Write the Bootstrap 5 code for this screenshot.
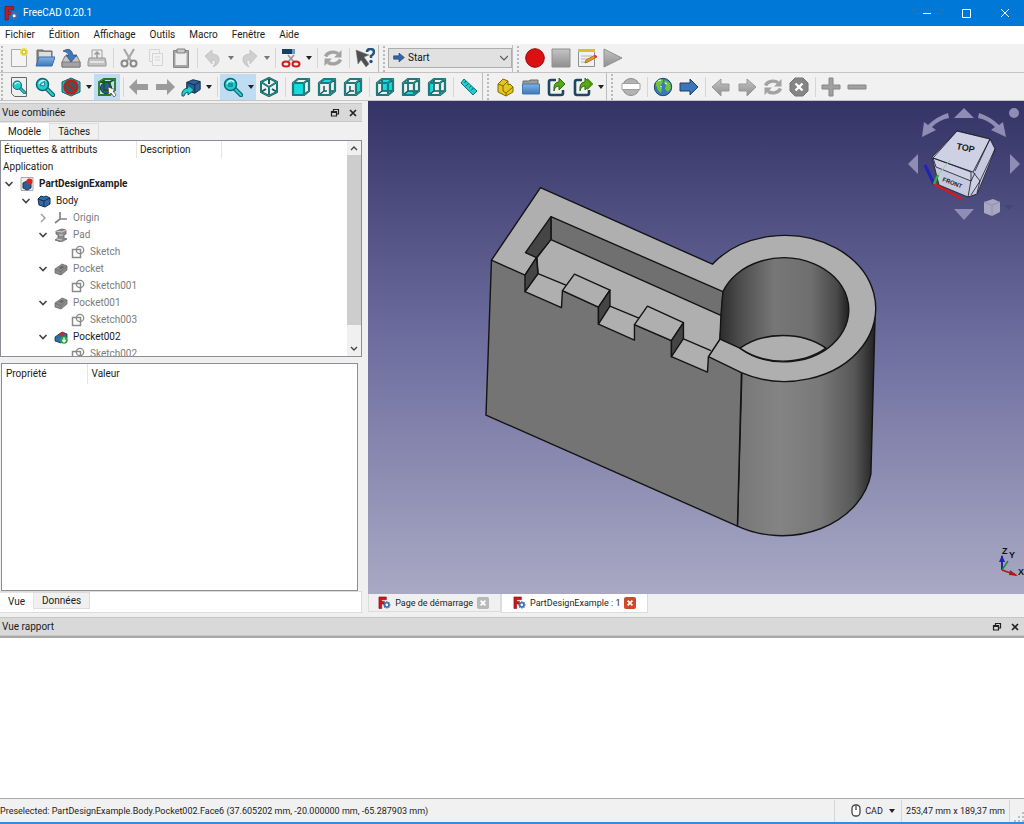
<!DOCTYPE html>
<html lang="fr">
<head>
<meta charset="utf-8">
<meta name="viewport" content="width=device-width, initial-scale=1">
<title>FreeCAD 0.20.1</title>
<link href="https://cdn.jsdelivr.net/npm/bootstrap@5.3.0/dist/css/bootstrap.min.css" rel="stylesheet">
<style>
body{font-family:Roboto,"Noto Sans",sans-serif;font-size:10px;line-height:16px;color:#1c1c1c;background:#f0f0f0}
button{font:inherit;color:inherit;border:0;background:none;padding:0}
svg{display:block;flex:none}
.titlebar{background:#0078d7;color:#fff;height:26px;padding-left:4px}
.winbtn{width:39px;height:26px}
.menubar{background:#fff;height:18px;padding-left:5px;gap:14px}
.menubar a{color:#1c1c1c;text-decoration:none}
.toolrow{height:29px;border-bottom:1px solid #c4c4c4;background:#f1f1f1}
.toolrow.low{height:28px}
.tool{width:26px;height:26px;display:flex;align-items:center;justify-content:center;flex:none}
.tool.on,.drop.on{background:#bfdcf2}
.drop{width:10px;height:26px;display:flex;align-items:center;justify-content:center;flex:none}
.drop::before{content:"";border:3px solid transparent;border-top:4px solid #222;border-bottom:0}
.drop.off::before{border-top-color:#777}
.gapline{width:6px;height:20px;flex:none;border-left:1px solid #d6d6d6;margin-left:3px;margin-right:-3px}
.grip{flex:none;width:10px;height:27px;border-left:1px solid #bdbdbd;background:radial-gradient(circle,#b9b9b9 1px,transparent 1px) 3px 0/4px 4px repeat-y}
.grip.wide{width:12px}
.grip.lead0{width:6px;border-left:0;background-position:0 0}
.bench{width:124px;height:20px;position:relative}
.bench select{width:100%;height:20px;border:1px solid #adadad;background:#e1e1e1;border-radius:0;font-size:10px;line-height:16px;padding:0 0 0 19px;appearance:none;color:#111}
.bench svg{position:absolute;top:4px;pointer-events:none}
.bench .arr{left:5px}.bench .chev{right:4px;top:7px}
.workarea{flex:20 1 0;min-height:0}
.leftdock{width:35.95%;padding:2px 6px 0 0;min-height:0}
.report{flex:7 1 0;min-height:0}
.dockhead{height:19px;background:#d9d9d9;border:1px solid #c6c6c6;border-left:0;border-right:0;padding:0 0 0 2px;flex:none}
.dockhead button{width:18px;height:16px;display:flex;align-items:center;justify-content:center}
.tabrow{height:18px;flex:none}
.tabrow button{padding:0 8px;background:#f0f0f0;border:1px solid #dcdcdc;border-left:0;line-height:16px;height:17px}
.tabrow button.cur{background:#fff;height:18px;border-color:#e4e4e4;border-bottom:0}
.treebox{flex:19 1 0;background:#fff;border:1px solid #8d8d96;min-height:0;overflow:hidden}
.treebox ul{list-style:none;margin:0;padding:0}
.treebox li{height:17px;line-height:17px;display:flex;align-items:center;gap:5px;color:#7c7c7c;white-space:nowrap}
.treebox li.act{color:#1c1c1c}
.l1{padding-left:2px}.l2{padding-left:19px}.l3{padding-left:36px}.treebox li.l4{padding-left:70px}
.treehead{height:17px;line-height:18px}
.treehead div{border-right:1px solid #e4e4e4;padding-left:3px}
.h1c{width:136px}.h2c{width:85px}
.sbar{width:14px;background:#f0f0f0;flex:none}
.sbar i{display:block;background:#cdcdcd;flex:0 0 79%}
.propbox{flex:20 1 0;background:#fff;border:1px solid #8d8d96;margin:6px 4px 0 1px;min-height:0}
.propbox table{width:100%}
.propbox th{font-weight:400;line-height:20px;padding:0 0 0 4px}
.propbox th:first-child{width:85px;border-right:1px solid #e4e4e4}
.bottabs{background:#fff;border:1px solid #dcdcdc;border-left:0;height:22px}
.scene{flex:1 1 0;min-height:0;position:relative;background:linear-gradient(#333366,#6f6fa0 50%,#a9a9c4);overflow:hidden}
.scene .model{width:100%;height:100%}
.navcube{position:absolute;top:0;right:0}
.axes{position:absolute;right:0;bottom:12px}
.doctabs{height:19px;flex:none;font-size:9px}
.doctabs .doc{display:flex;align-items:center;height:18px;border:1px solid #dcdcdc;border-top:0;background:#f0f0f0;padding:0 11px 0 9px;gap:4px}
.doctabs .doc.cur{background:#fff;height:19px;padding:0 11px}
.closer{width:12px;height:12px;border-radius:2px;background:#b9b9b9;display:flex;align-items:center;justify-content:center}
.closer.hot{background:#cf4a24}
.logarea{flex:1;border:0;background:#fff;border-top:2px solid #a8a8a8;resize:none;outline:0;display:block;width:100%}
.statusbar{height:26px;border-top:1px solid #a8a8a8;border-bottom:2px solid #3c8bd0;background:#f1f1f1;font-size:9px}
.cell{border-left:1px solid #d6d6d6;height:22px;display:flex;align-items:center}
</style>
</head>
<body class="d-flex flex-column vh-100 overflow-hidden m-0">
<svg width="0" height="0" class="position-absolute" aria-hidden="true">
<defs>
<linearGradient id="gg" x1="0" y1="0" x2="0" y2="1"><stop offset="0" stop-color="#c4c4c4"/><stop offset="1" stop-color="#8f8f8f"/></linearGradient>
<linearGradient id="bb" x1="0" y1="0" x2="0" y2="1"><stop offset="0" stop-color="#82b4e4"/><stop offset="1" stop-color="#3d78bb"/></linearGradient>
<symbol id="fc" viewBox="0 0 14 14"><path d="M1 .5h8v3H4v2h3v2.500H4V13H1z" fill="#d0161d" stroke="#7a0c10" stroke-width=".6"/><circle cx="9.500" cy="9" r="2.300" fill="#fff" stroke="#3f6eb0" stroke-width="1.800"/><path d="M9.500 5v1.500M9.500 11.500V13M5.500 9H7M12 9h1.500M6.700 6.200l1 1M11.300 10.800l1 1M6.700 11.800l1-1M11.300 7.200l1-1" stroke="#3f6eb0" stroke-width="1.500"/></symbol>
<symbol id="cube" viewBox="0 0 20 20"><path d="M2 6l5-4h11v12l-5 4H2zM2 6h11v12M13 6l5-4" fill="none" stroke="#0c5c5f" stroke-width="2.200" stroke-linejoin="round"/><path d="M2 6l5-4h11v12l-5 4H2zM2 6h11v12M13 6l5-4" fill="none" stroke="#3aa7a6" stroke-width=".8"/></symbol>
<symbol id="hid" viewBox="0 0 20 20"><path d="M7 2v12h11M7 14l-5 4" fill="none" stroke="#0c5c5f" stroke-width="1.600"/></symbol>
<symbol id="mag" viewBox="0 0 20 20"><path d="M11 11l7 7" stroke="#0b666c" stroke-width="4.500" stroke-linecap="round"/><path d="M11 11l7 7" stroke="#21cdd0" stroke-width="2.200" stroke-linecap="round"/><circle cx="7.500" cy="7.500" r="6" fill="#21cdd0" stroke="#0b666c" stroke-width="1.500"/><path d="M4 7a4 4 0 0 1 7-2" fill="none" stroke="#c9ffff" stroke-width="1.500"/></symbol>
<symbol id="larr" viewBox="0 0 20 20"><path d="M0 10l8-8v5h11v6H8v5z" fill="#9b9b9b"/></symbol>
<symbol id="rarr" viewBox="0 0 20 20"><path d="M20 10l-8-8v5H1v6h11v5z" fill="#9b9b9b"/></symbol>
<symbol id="sync" viewBox="0 0 20 20"><path d="M2.500 8.500A8 6.500 0 0 1 15 5.500M17.500 11.500A8 6.500 0 0 1 5 14.500" fill="none" stroke="#a2a2a2" stroke-width="3.400"/><path d="M18.500 2v7.500H11zM1.500 18v-7.500H9z" fill="#a2a2a2"/></symbol>
<symbol id="bcube" viewBox="0 0 20 20"><path d="M3 6l7-3 8 2v9l-6 4-9-3z" fill="#2e5f9a" stroke="#10243f"/><path d="M3 6l9 3 6-4M12 9v9" stroke="#10243f" fill="none"/></symbol>
<symbol id="chv" viewBox="0 0 10 10"><path d="M1.500 3L5 6.500 8.500 3" fill="none" stroke="#444" stroke-width="1.600"/></symbol>
<symbol id="sk" viewBox="0 0 14 14"><path d="M1.500 4.500h8v8h-8z" fill="none" stroke="#8a8a8a" stroke-width="1.500"/><circle cx="9" cy="5" r="3.700" fill="none" stroke="#8a8a8a" stroke-width="1.300"/></symbol>
<symbol id="pk" viewBox="0 0 14 14"><path d="M1 7l7-5 5 2v4l-6 5-6-2z" fill="#8b8b8b" stroke="#6c6c6c" stroke-width=".8"/><path d="M1 7l6 2.500L13 4M7 9.500V13" fill="none" stroke="#6c6c6c" stroke-width=".7"/><path d="M5 6l3-2 2 1-3 2z" fill="#606060"/></symbol>
<symbol id="rest" viewBox="0 0 10 10"><path d="M3.500 3V1.500h5V6H7M1.500 3.500h5v4.500h-5zM1.500 4.500h5" fill="none" stroke="#222" stroke-width="1.200"/></symbol>
<symbol id="x" viewBox="0 0 10 10"><path d="M2 2l6 6M8 2L2 8" stroke="#222" stroke-width="1.700"/></symbol>
<symbol id="xw" viewBox="0 0 10 10"><path d="M2 2l6 6M8 2L2 8" stroke="#fff" stroke-width="2.200"/></symbol>
<symbol id="exp" viewBox="0 0 20 20"><path d="M9 3H4Q2 3 2 5v11q0 2 2 2h10q2 0 2-2v-3" fill="none" stroke="#1f4763" stroke-width="2.600"/><path d="M7 14Q6 5 12 5V1l6 6-6 6V9q-4 0-5 5z" fill="#5aa818" stroke="#2f6a08"/></symbol>
</defs>
</svg>

<header class="titlebar d-flex align-items-center">
<svg width="15" height="15"><use href="#fc"/></svg><span class="ms-1">FreeCAD 0.20.1</span>
<div class="ms-auto d-flex">
<button class="winbtn" aria-label="Réduire"><svg class="mx-auto" width="10" height="10"><path d="M1 5.500h8" stroke="#fff"/></svg></button>
<button class="winbtn" aria-label="Agrandir"><svg class="mx-auto" width="10" height="10"><path d="M1.500 1.500h8v8h-8z" fill="none" stroke="#fff"/></svg></button>
<button class="winbtn" aria-label="Fermer"><svg class="mx-auto" width="10" height="10"><path d="M1 1l8 8M9 1L1 9" stroke="#fff"/></svg></button>
</div>
</header>
<nav class="menubar d-flex align-items-center"><a href="#">Fichier</a><a href="#">Édition</a><a href="#">Affichage</a><a href="#">Outils</a><a href="#">Macro</a><a href="#">Fenêtre</a><a href="#">Aide</a></nav>

<div class="toolrow d-flex align-items-center">
<span class="grip lead0"></span>
<button class="tool" aria-label="Nouveau"><svg width="20" height="20"><path d="M2.500 1.500h15v17h-15z" fill="#f4f4f4" stroke="#a9a9a9"/><circle cx="15" cy="4" r="4" fill="#ede24a"/><circle cx="15" cy="4" r="2" fill="#fffbd0" stroke="#c2b21f"/></svg></button>
<button class="tool" aria-label="Ouvrir"><svg width="20" height="20"><path d="M2 2h6l1 1h8v14H2z" fill="#8d8d8d" stroke="#666"/><path d="M4 4h12v6H4z" fill="#ddd"/><path d="M4 9h16l-3 9H1z" fill="url(#bb)" stroke="#3a6ca8"/></svg></button>
<button class="tool" aria-label="Enregistrer"><svg width="20" height="20"><path d="M4 8h12l3 6v5H1v-5z" fill="#c6c6c6" stroke="#7c7c7c"/><path d="M1 14h18v5H1z" fill="#a3a3a3" stroke="#7c7c7c"/><path d="M2 3q8-5 10 4h4l-6 7-5-7h3q-1-3-6-4z" fill="#3f78b5" stroke="#254f80" stroke-width=".7"/></svg></button>
<button class="tool" aria-label="Imprimer"><svg width="20" height="20"><path d="M5 2h10v9H5z" fill="#eee" stroke="#a0a0a0"/><path d="M10 4v6M7.500 6.500L10 4l2.500 2.500" stroke="#999" stroke-width="1.500" fill="none"/><path d="M2 10h16l1 4v4H1v-4z" fill="#c2c2c2" stroke="#969696"/><path d="M3 14h14" stroke="#eee" stroke-width="1.500"/></svg></button>
<span class="gapline"></span>
<button class="tool" aria-label="Couper"><svg width="20" height="20"><path d="M5 1l7 12M15 1L8 13" stroke="#a8a8a8" stroke-width="2.200"/><circle cx="5.500" cy="15.500" r="3" fill="none" stroke="#8a8a8a" stroke-width="2"/><circle cx="14.500" cy="15.500" r="3" fill="none" stroke="#8a8a8a" stroke-width="2"/></svg></button>
<button class="tool" aria-label="Copier"><svg width="20" height="20" fill="#f2f2f2" stroke="#d4d4d4"><path d="M4.500 1.500h10v12h-10z"/><path d="M7.500 5.500h10v12h-10zM10 9h5M10 12h5"/></svg></button>
<button class="tool" aria-label="Coller"><svg width="20" height="20"><path d="M2.500 2.500h15v17h-15z" fill="#a5a5a5" stroke="#858585"/><path d="M4.500 5h11v12h-11z" fill="#efefef"/><path d="M6 1h8v4H6z" fill="#c9c9c9" stroke="#808080"/></svg></button>
<span class="gapline"></span>
<button class="tool" aria-label="Annuler"><svg width="20" height="20"><path d="M2 8l7-6v4q8 0 7 7-1 4-6 6 5-7-1-7v4z" fill="#cfcfcf" stroke="#bcbcbc" stroke-width=".7"/></svg></button>
<button class="drop off" aria-label="Liste annuler"></button>
<button class="tool" aria-label="Rétablir"><svg width="20" height="20"><path d="M18 8l-7-6v4Q3 6 4 13q1 4 6 6-5-7 1-7v4z" fill="#cfcfcf" stroke="#bcbcbc" stroke-width=".7"/></svg></button>
<button class="drop off" aria-label="Liste rétablir"></button>
<span class="gapline"></span>
<button class="tool" aria-label="Presse-papiers"><svg width="20" height="20"><path d="M1 1h10v5H1z" fill="#183e62"/><path d="M11 1h3v5h-3z" fill="#6e9bc4"/><path d="M7 7l6 7M13 7l-6 7" stroke="#999" stroke-width="1.800"/><ellipse cx="5" cy="16" rx="3.500" ry="2.500" fill="none" stroke="#d41c1c" stroke-width="2"/><ellipse cx="15" cy="16" rx="3.500" ry="2.500" fill="none" stroke="#d41c1c" stroke-width="2"/></svg></button>
<button class="drop" aria-label="Options"></button>
<span class="gapline"></span>
<button class="tool" aria-label="Rafraîchir"><svg width="20" height="20"><use href="#sync"/></svg></button>
<span class="gapline"></span>
<button class="tool" aria-label="Qu'est-ce que c'est ?"><svg width="20" height="20"><path d="M1 2l13 5-5 2 5 7-3 3-5-7-3 4z" fill="#4c5055" stroke="#777" stroke-width=".5"/><path d="M12 4q0-3 3.500-3T19 4q0 2-3 4v2" fill="none" stroke="#2a527e" stroke-width="2.500"/><circle cx="16" cy="13.500" r="1.700" fill="#2a527e"/></svg></button>
<span class="grip"></span>
<div class="bench"><svg class="arr" width="12" height="11" viewBox="0 0 20 20" preserveAspectRatio="none"><path d="M19 10l-9-8v5H1v6h9v5z" fill="#3567a6" stroke="#173a66"/></svg><select aria-label="Atelier"><option>Start</option></select><svg class="chev" width="8" height="6"><path d="M0 1l4 4 4-4" fill="none" stroke="#555" stroke-width="1.200"/></svg></div>
<span class="grip"></span>
<button class="tool" aria-label="Enregistrer macro"><svg width="20" height="20"><circle cx="10" cy="10" r="9.300" fill="#dc1010" stroke="#930909"/></svg></button>
<button class="tool" aria-label="Arrêter"><svg width="20" height="20"><path d="M1 1h18v18H1z" fill="url(#gg)" stroke="#8f8f8f"/></svg></button>
<button class="tool" aria-label="Macros"><svg width="20" height="20"><path d="M1.500 2.500h16v16h-16z" fill="#f1f1f1" stroke="#909090"/><path d="M1 1h17v3H1z" fill="#dbbf2e"/><path d="M4 8h11M4 11h8M4 14h6" stroke="#b5b5b5"/><path d="M8 15l1-3 9-5 2 2-9 5z" fill="#ee9a1e" stroke="#8d5a20" stroke-width=".7"/><path d="M17 8l2-1 1 2-2 1z" fill="#d33"/></svg></button>
<button class="tool" aria-label="Exécuter"><svg width="20" height="20"><path d="M1 1l18 9-18 9z" fill="url(#gg)" stroke="#8f8f8f"/></svg></button>
</div>

<div class="toolrow low d-flex align-items-center">
<span class="grip lead0"></span>
<button class="tool" aria-label="Tout afficher"><svg width="20" height="20"><path d="M2.500 .5h15v19h-12l-3-3z" fill="#efefef" stroke="#666"/><use href="#mag" x="3" y="3" width="14" height="14"/></svg></button>
<button class="tool" aria-label="Sélection"><svg width="20" height="20"><use href="#mag"/><path d="M5 8l5-4-1 5z" fill="#e9ffff" stroke="#0b666c" stroke-width=".8"/></svg></button>
<button class="tool" aria-label="Style"><svg width="20" height="20"><path d="M10 1l9 4v10l-9 4-9-4V5z" fill="#1fb9bd" stroke="#0b666c"/><circle cx="10" cy="10" r="6.500" fill="#3c5a5e" stroke="#c41c1c" stroke-width="2.400"/><path d="M5.500 5.500l9 9" stroke="#c41c1c" stroke-width="2.400"/></svg></button>
<button class="drop" aria-label="Styles"></button>
<button class="tool on" aria-label="Boîte englobante"><svg width="20" height="20"><circle cx="9" cy="11" r="5.500" fill="#2b5e97" stroke="#10304f"/><path d="M2 5l5-3h11v11l-5 5H2zM2 5h11v13M13 5l5-3M7 2v11h11" fill="none" stroke="#155f17" stroke-width="1.800"/><path d="M2 5l5-3h11v11l-5 5H2z" fill="none" stroke="#42a93a" stroke-width=".8"/><path d="M11 10l8 3-3 1 3 4-2 2-3-4-2 2z" fill="#fff" stroke="#444" stroke-width=".7"/></svg></button>
<span class="gapline"></span>
<button class="tool" aria-label="Précédent"><svg width="20" height="20"><use href="#larr"/></svg></button>
<button class="tool" aria-label="Suivant"><svg width="20" height="20"><use href="#rarr"/></svg></button>
<button class="tool" aria-label="Lien"><svg width="20" height="20"><use href="#bcube" x="3" y="-1" width="18" height="20"/><path d="M1 19q-1-7 6-8V8l6 5-6 5v-3q-3 0-4 4z" fill="#21cdd0" stroke="#0b5a60"/></svg></button>
<button class="drop" aria-label="Liens"></button>
<span class="gapline"></span>
<button class="tool on" aria-label="Zoom"><svg width="20" height="20"><use href="#mag"/><path d="M5 7h5M5 9h5" stroke="#0b666c"/></svg></button>
<button class="drop on" aria-label="Zooms"></button>
<button class="tool" aria-label="Isométrique"><svg width="20" height="20"><path d="M10 1l8 4v10l-8 4-8-4V5zM2 5l8 5 8-5M10 10v9M10 1v6M2 15l5-3M18 15l-5-3" fill="none" stroke="#0c5c5f" stroke-width="2" stroke-linejoin="round"/><path d="M10 1l8 4v10l-8 4-8-4V5zM2 5l8 5 8-5M10 10v9" fill="none" stroke="#36aaa9" stroke-width=".7"/></svg></button>
<span class="gapline"></span>
<button class="tool" aria-label="Face"><svg width="20" height="20"><path d="M2 6h11v12H2z" fill="#19dadf"/><use href="#cube"/></svg></button>
<button class="tool" aria-label="Dessus"><svg width="20" height="20"><path d="M2 6l5-4h11l-5 4z" fill="#19dadf"/><path d="M7 9v5l-5 4M7 14h3M14 14h3" stroke="#0c5c5f" fill="none" stroke-width="1.500"/><use href="#cube"/></svg></button>
<button class="tool" aria-label="Droite"><svg width="20" height="20"><path d="M13 6l5-4v12l-5 4z" fill="#19dadf"/><path d="M7 9v5l-5 4M7 14h4" stroke="#0c5c5f" fill="none" stroke-width="1.500"/><use href="#cube"/></svg></button>
<span class="gapline"></span>
<button class="tool" aria-label="Arrière"><svg width="20" height="20"><path d="M7 2h11v12H7z" fill="#19dadf"/><use href="#hid"/><use href="#cube"/></svg></button>
<button class="tool" aria-label="Dessous"><svg width="20" height="20"><path d="M2 18l5-4h11l-5 4z" fill="#19dadf"/><use href="#hid"/><use href="#cube"/></svg></button>
<button class="tool" aria-label="Gauche"><svg width="20" height="20"><path d="M2 6l5-4v12l-5 4z" fill="#19dadf"/><use href="#hid"/><use href="#cube"/></svg></button>
<span class="gapline"></span>
<button class="tool" aria-label="Mesurer"><svg width="20" height="20"><path d="M5 2l13 12-4 4L2 6z" fill="#21cdd0" stroke="#0b7378"/><path d="M7 4L5.500 6M9.500 6.500L7 9M12 9l-1.500 1.500M14.500 11l-2.500 2.500" stroke="#0b5a60"/></svg></button>
<span class="grip"></span>
<button class="tool" aria-label="Pièce"><svg width="20" height="20"><path d="M3 7l5-5 5 2v4l2-1 3 3v5l-7 4-8-4z" fill="#e5c71c" stroke="#7c690b"/><path d="M3 7l5 2 5-5M8 9v5l3 2 7-6M11 16v3" fill="none" stroke="#7c690b"/></svg></button>
<button class="tool" aria-label="Groupe"><svg width="20" height="20"><path d="M2 4h6l1-1h8v6H2z" fill="#9b9b9b" stroke="#6c6c6c"/><path d="M1.500 7h17v10h-17z" fill="url(#bb)" stroke="#4576ad"/></svg></button>
<button class="tool" aria-label="Créer lien"><svg width="20" height="20"><use href="#exp"/></svg></button>
<button class="tool" aria-label="Actions lien"><svg width="20" height="20"><use href="#exp"/><path d="M14 2l5 5-5 5" fill="none" stroke="#4e9512" stroke-width="2"/></svg></button>
<button class="drop" aria-label="Plus"></button>
<span class="grip wide"></span>
<button class="tool" aria-label="Adresse"><svg width="20" height="20"><circle cx="10" cy="10" r="8.500" fill="#b2b2b2" stroke="#8d8d8d"/><path d="M1 6.500h18v6H1z" fill="#fff" stroke="#a0a0a0"/></svg></button>
<span class="gapline"></span>
<button class="tool" aria-label="Site web"><svg width="20" height="20"><circle cx="10" cy="10" r="8.700" fill="#3a78b8" stroke="#21486f"/><path d="M3 5q4-4 7-2l-1 4-3 2 3 2-1 5-3-3-2-5zM12 3l5 3 1 5-3 4-3-3 1-4-2-2z" fill="#6fc43b"/><path d="M5 4l3-1M12 6l2 1M7 9l2 1" stroke="#e8ffe0"/></svg></button>
<button class="tool" aria-label="Départ"><svg width="20" height="20"><path d="M19 10l-8-8v4H1v8h10v4z" fill="#3a76b8" stroke="#1c3f6c"/></svg></button>
<span class="gapline"></span>
<button class="tool" aria-label="Page précédente"><svg width="20" height="20"><path d="M1 10l9-8v5h8v7h-8v5z" fill="url(#gg)" stroke="#999"/></svg></button>
<button class="tool" aria-label="Page suivante"><svg width="20" height="20"><path d="M19 10l-9-8v5H2v7h8v5z" fill="url(#gg)" stroke="#999"/></svg></button>
<button class="tool" aria-label="Recharger"><svg width="20" height="20"><use href="#sync"/></svg></button>
<button class="tool" aria-label="Stop"><svg width="20" height="20"><path d="M6 1h8l5 5v8l-5 5H6l-5-5V6z" fill="#858585" stroke="#757575"/><path d="M6.500 6.500l7 7M13.500 6.500l-7 7" stroke="#fff" stroke-width="2.400"/></svg></button>
<span class="gapline"></span>
<button class="tool" aria-label="Agrandir"><svg width="20" height="20"><path d="M8 1h4v7h7v4h-7v7H8v-7H1V8h7z" fill="#a0a0a0" stroke="#868686"/></svg></button>
<button class="tool" aria-label="Rétrécir"><svg width="20" height="20"><path d="M1 8h18v4H1z" fill="#a0a0a0" stroke="#868686"/></svg></button>
</div>

<main class="workarea d-flex">
<section class="leftdock d-flex flex-column">
<div class="dockhead d-flex align-items-center"><span class="me-auto">Vue combinée</span><button aria-label="Détacher"><svg width="10" height="10"><use href="#rest"/></svg></button><button aria-label="Fermer"><svg width="10" height="10"><use href="#x"/></svg></button></div>
<div class="tabrow d-flex align-items-end"><button class="cur">Modèle</button><button>Tâches</button></div>
<div class="treebox d-flex">
<div class="flex-grow-1 overflow-hidden">
<div class="treehead d-flex"><div class="h1c">Étiquettes &amp; attributs</div><div class="h2c">Description</div></div>
<ul>
<li class="act l1">Application</li>
<li class="act l1 fw-bold"><svg width="12" height="10"><use href="#chv"/></svg><svg width="14" height="14"><path d="M1 .5h12v13H1z" fill="#eee" stroke="#aaa"/><path d="M3 6l4-2 4 2v5l-4 2-4-2z" fill="#2e5f9a" stroke="#173457"/><circle cx="9.500" cy="4.500" r="3" fill="#d22"/></svg>PartDesignExample</li>
<li class="act l2"><svg width="12" height="10"><use href="#chv"/></svg><svg width="14" height="14"><path d="M1 5l3-3 3 1 2-1 4 2v6l-5 3-6-2z" fill="#336aa8" stroke="#12304f"/><path d="M1 5l6 2 6-3M7 7v6" fill="none" stroke="#12304f"/></svg>Body</li>
<li class="l3"><svg width="12" height="10"><path d="M4 1l4 4-4 4" fill="none" stroke="#999" stroke-width="1.300"/></svg><svg width="14" height="14"><path d="M6 1v7l-5 4M6 8h7" fill="none" stroke="#858585" stroke-width="1.700"/></svg>Origin</li>
<li class="l3"><svg width="12" height="10"><use href="#chv"/></svg><svg width="14" height="14"><path d="M2 3l6-2 4 1v4l-2 1v3l3 1-6 3-6-2 3-2V7L2 6z" fill="#8c8c8c" stroke="#666" stroke-width=".8"/><path d="M2 3l6 1 4-2M3 11l5 1M5 7h4" stroke="#e2e2e2" stroke-width=".8" fill="none"/></svg>Pad</li>
<li class="l4"><svg width="14" height="14"><use href="#sk"/></svg>Sketch</li>
<li class="l3"><svg width="12" height="10"><use href="#chv"/></svg><svg width="14" height="14"><use href="#pk"/></svg>Pocket</li>
<li class="l4"><svg width="14" height="14"><use href="#sk"/></svg>Sketch001</li>
<li class="l3"><svg width="12" height="10"><use href="#chv"/></svg><svg width="14" height="14"><use href="#pk"/></svg>Pocket001</li>
<li class="l4"><svg width="14" height="14"><use href="#sk"/></svg>Sketch003</li>
<li class="act l3"><svg width="12" height="10"><use href="#chv"/></svg><svg width="14" height="14"><path d="M1 7l7-5 5 2v4l-6 5-6-2z" fill="#336aa8" stroke="#12304f" stroke-width=".8"/><path d="M5 5l4-3 2 2-3 3z" fill="#d22"/><circle cx="10" cy="10" r="3.800" fill="#26a83b"/><path d="M10 7.500v4M8.300 10l1.700 2 1.700-2" stroke="#fff" stroke-width="1.300" fill="none"/></svg>Pocket002</li>
<li class="l4"><svg width="14" height="14"><use href="#sk"/></svg>Sketch002</li>
</ul>
</div>
<div class="sbar d-flex flex-column"><svg class="my-1 mx-auto" width="8" height="6"><path d="M1 5l3-3 3 3" fill="none" stroke="#444" stroke-width="1.400"/></svg><i></i><svg class="mt-auto mb-1 mx-auto" width="8" height="6"><path d="M1 1l3 3 3-3" fill="none" stroke="#444" stroke-width="1.400"/></svg></div>
</div>
<div class="propbox"><table><thead><tr><th scope="col">Propriété</th><th scope="col">Valeur</th></tr></thead></table></div>
<div class="tabrow bottabs d-flex align-items-start mb-1"><button class="cur">Vue</button><button>Données</button></div>
</section>

<section class="flex-grow-1 d-flex flex-column mb-1">
<div class="scene">
<svg class="model" viewBox="368 101 656 493" role="img" aria-label="Pièce 3D">
<defs>
<linearGradient id="cyl" gradientUnits="userSpaceOnUse" x1="738" y1="0" x2="875" y2="0"><stop offset="0" stop-color="#777"/><stop offset=".3" stop-color="#848484"/><stop offset=".6" stop-color="#787878"/><stop offset=".85" stop-color="#575757"/><stop offset="1" stop-color="#222"/></linearGradient>
<linearGradient id="hole" gradientUnits="userSpaceOnUse" x1="720" y1="0" x2="850" y2="0"><stop offset="0" stop-color="#2c2c2c"/><stop offset=".15" stop-color="#4c4c4c"/><stop offset=".42" stop-color="#777"/><stop offset=".7" stop-color="#6f6f6f"/><stop offset=".9" stop-color="#484848"/><stop offset="1" stop-color="#1c1c1c"/></linearGradient>
</defs>
<g stroke="#141414" stroke-width="1.400" stroke-linejoin="round" fill="#afafaf">
<path fill="url(#cyl)" d="M742 372L737.500 526A90 73 0 0 0 871 474L875.500 303z"/>
<path fill="#747474" d="M491.500 260L486 415 737.500 526 741.500 372.500 708 350 640 300 525 255z"/>
<path d="M540.500 187.500L491.500 260 525 275 536.500 257.500 551 239 720 339 708.500 356.500 741.500 372.500A91 73 0 1 0 712.500 264z"/>
<path d="M551 239L537 257.500 538 273.500 525 291.500 561.500 307.500 562.500 290.500 598.500 307 598.500 324 634.500 340 634.500 324.500 671.500 340.500 671.500 356.500 707.500 372 708.500 356.500 720 339 722 315z"/>
<path fill="#707070" d="M551 216.500L723 291.500 721.500 315.500 551 239.500z"/>
<path fill="#454545" d="M551 216.500L525.500 252.500 536.500 257.500 551 239.500z"/>
<path fill="#454545" d="M536.500 257.500L525 275v16.500L538 273.500z"/>
<path fill="none" d="M538 273.500L566 285M610 306l29 12M683 338.500l28 12"/>
<path d="M562.500 290.500L574.500 274 610 290 598.500 307z"/>
<path fill="#454545" d="M610 290v16L598.500 324V307z"/>
<path d="M634.500 324.500L647.500 306 683.500 322.500 671.500 340.500z"/>
<path fill="#454545" d="M683.500 322.500v16L671.500 356.500v-16z"/>
<path fill="url(#hole)" d="M723 291.500A65 52 0 1 1 740 348L720 339 721 315z"/>
<path d="M740 348A60 42 0 0 1 826 348A65 52 0 0 1 740 348z"/>
</g>
</svg>
<svg class="navcube" width="124" height="125" viewBox="0 0 124 125" aria-hidden="true">
<g fill="#8d8db6"><path d="M54 17l10-10 10 10zM54 108h20l-10 11zM8 63l10-10v20zM120 63l-10-10v20z"/><circle cx="114" cy="12" r="5"/><path d="M48 12q-12 4-20 12l-4-3-2 15 14-7-4-3q7-7 17-9zM79 12q12 4 20 12l4-3 3 15-15-7 4-3q-7-7-17-9z"/></g>
<path d="M57 30L90 38l5 10-3 8-15 37-9 3-29-12-7-28z" fill="#c6c9df" stroke="#181822" stroke-width=".8"/>
<path d="M57 30l33 8-17 33-40-14zM33 57l38 14v9l-35-14zM73 71l7 9-9 14M71 79l-3 17M90 38L75 70M71 80l4-8M95 48L80 80l-3 12" fill="#d5d8ea" fill-opacity=".5" stroke="#181822" stroke-width=".8"/>
<text x="56" y="48" transform="rotate(12 56 48)" font-size="9" font-weight="700" font-family="Liberation Sans" fill="#191919">TOP</text>
<text x="42" y="80" transform="rotate(21 42 80)" font-size="6" font-weight="700" font-family="Liberation Sans" fill="#191919">FRONT</text>
<path d="M34 83L25 64" stroke="#2222b8" stroke-width="3"/><path d="M34 83l28 15" stroke="#e01515" stroke-width="2"/><path d="M34 83l4-9" stroke="#25b33b" stroke-width="2.500"/><path d="M38 74l12-15" stroke="#8ed49a"/>
<path d="M84 101l9-3 7 3v10l-8 4-8-3z" fill="#a7a7c2"/><path d="M84 101l8 3v11M92 104l8-3" stroke="#8f8fb0" fill="none"/><path d="M104 104h9l-4.500 5z" fill="#444475"/>
</svg>
<svg class="axes" width="28" height="36" viewBox="0 0 28 36" aria-hidden="true">
<path d="M6 24V10" stroke="#2424a8" stroke-width="2"/><path d="M3 16l3-7 3 7z" fill="#2424a8"/><path d="M6 24l6-9" stroke="#1e8c2c" stroke-width="1.500"/><path d="M6 24l14 5" stroke="#a81c1c" stroke-width="1.500"/><path d="M14 24l8 6-9-1z" fill="#a81c1c"/>
<g font-family="Liberation Sans" font-size="9" font-weight="700" fill="#111"><text x="6" y="8">Z</text><text x="13" y="12">Y</text><text x="22" y="29">X</text></g>
</svg>
</div>
<div class="doctabs d-flex">
<div class="doc"><svg width="13" height="14"><use href="#fc"/></svg><span>Page de démarrage</span><button class="closer" aria-label="Fermer"><svg width="8" height="8"><use href="#xw"/></svg></button></div>
<div class="doc cur"><svg width="13" height="14"><use href="#fc"/></svg><span>PartDesignExample : 1</span><button class="closer hot" aria-label="Fermer"><svg width="8" height="8"><use href="#xw"/></svg></button></div>
</div>
</section>
</main>

<section class="report d-flex flex-column">
<div class="dockhead d-flex align-items-center"><span class="me-auto">Vue rapport</span><button aria-label="Détacher"><svg width="10" height="10"><use href="#rest"/></svg></button><button aria-label="Fermer"><svg width="10" height="10"><use href="#x"/></svg></button></div>
<textarea class="logarea" aria-label="Vue rapport" readonly></textarea>
</section>
<footer class="statusbar d-flex align-items-center">
<span class="me-auto text-nowrap">Preselected: PartDesignExample.Body.Pocket002.Face6 (37.605202 mm, -20.000000 mm, -65.287903 mm)</span>
<button class="cell ps-3 pe-1 gap-1"><svg width="10" height="14"><rect x="1" y="1" width="8" height="11" rx="3.500" fill="#fff" stroke="#444" stroke-width="1.300"/><path d="M5 2v4" stroke="#444" stroke-width="1.300"/></svg>CAD<span class="drop"></span></button>
<span class="cell ps-1 pe-1 text-nowrap">253,47 mm x 189,37 mm</span>
<svg class="cell" width="15" height="22" aria-hidden="true"><path d="M12 12h2v2h-2zM8 16h2v2H8zM12 16h2v2h-2zM4 20h2v2H4zM8 20h2v2H8zM12 20h2v2h-2z" fill="#bdbdbd"/></svg>
</footer>
<script src="https://cdn.jsdelivr.net/npm/bootstrap@5.3.0/dist/js/bootstrap.bundle.min.js"></script>
</body>
</html>
